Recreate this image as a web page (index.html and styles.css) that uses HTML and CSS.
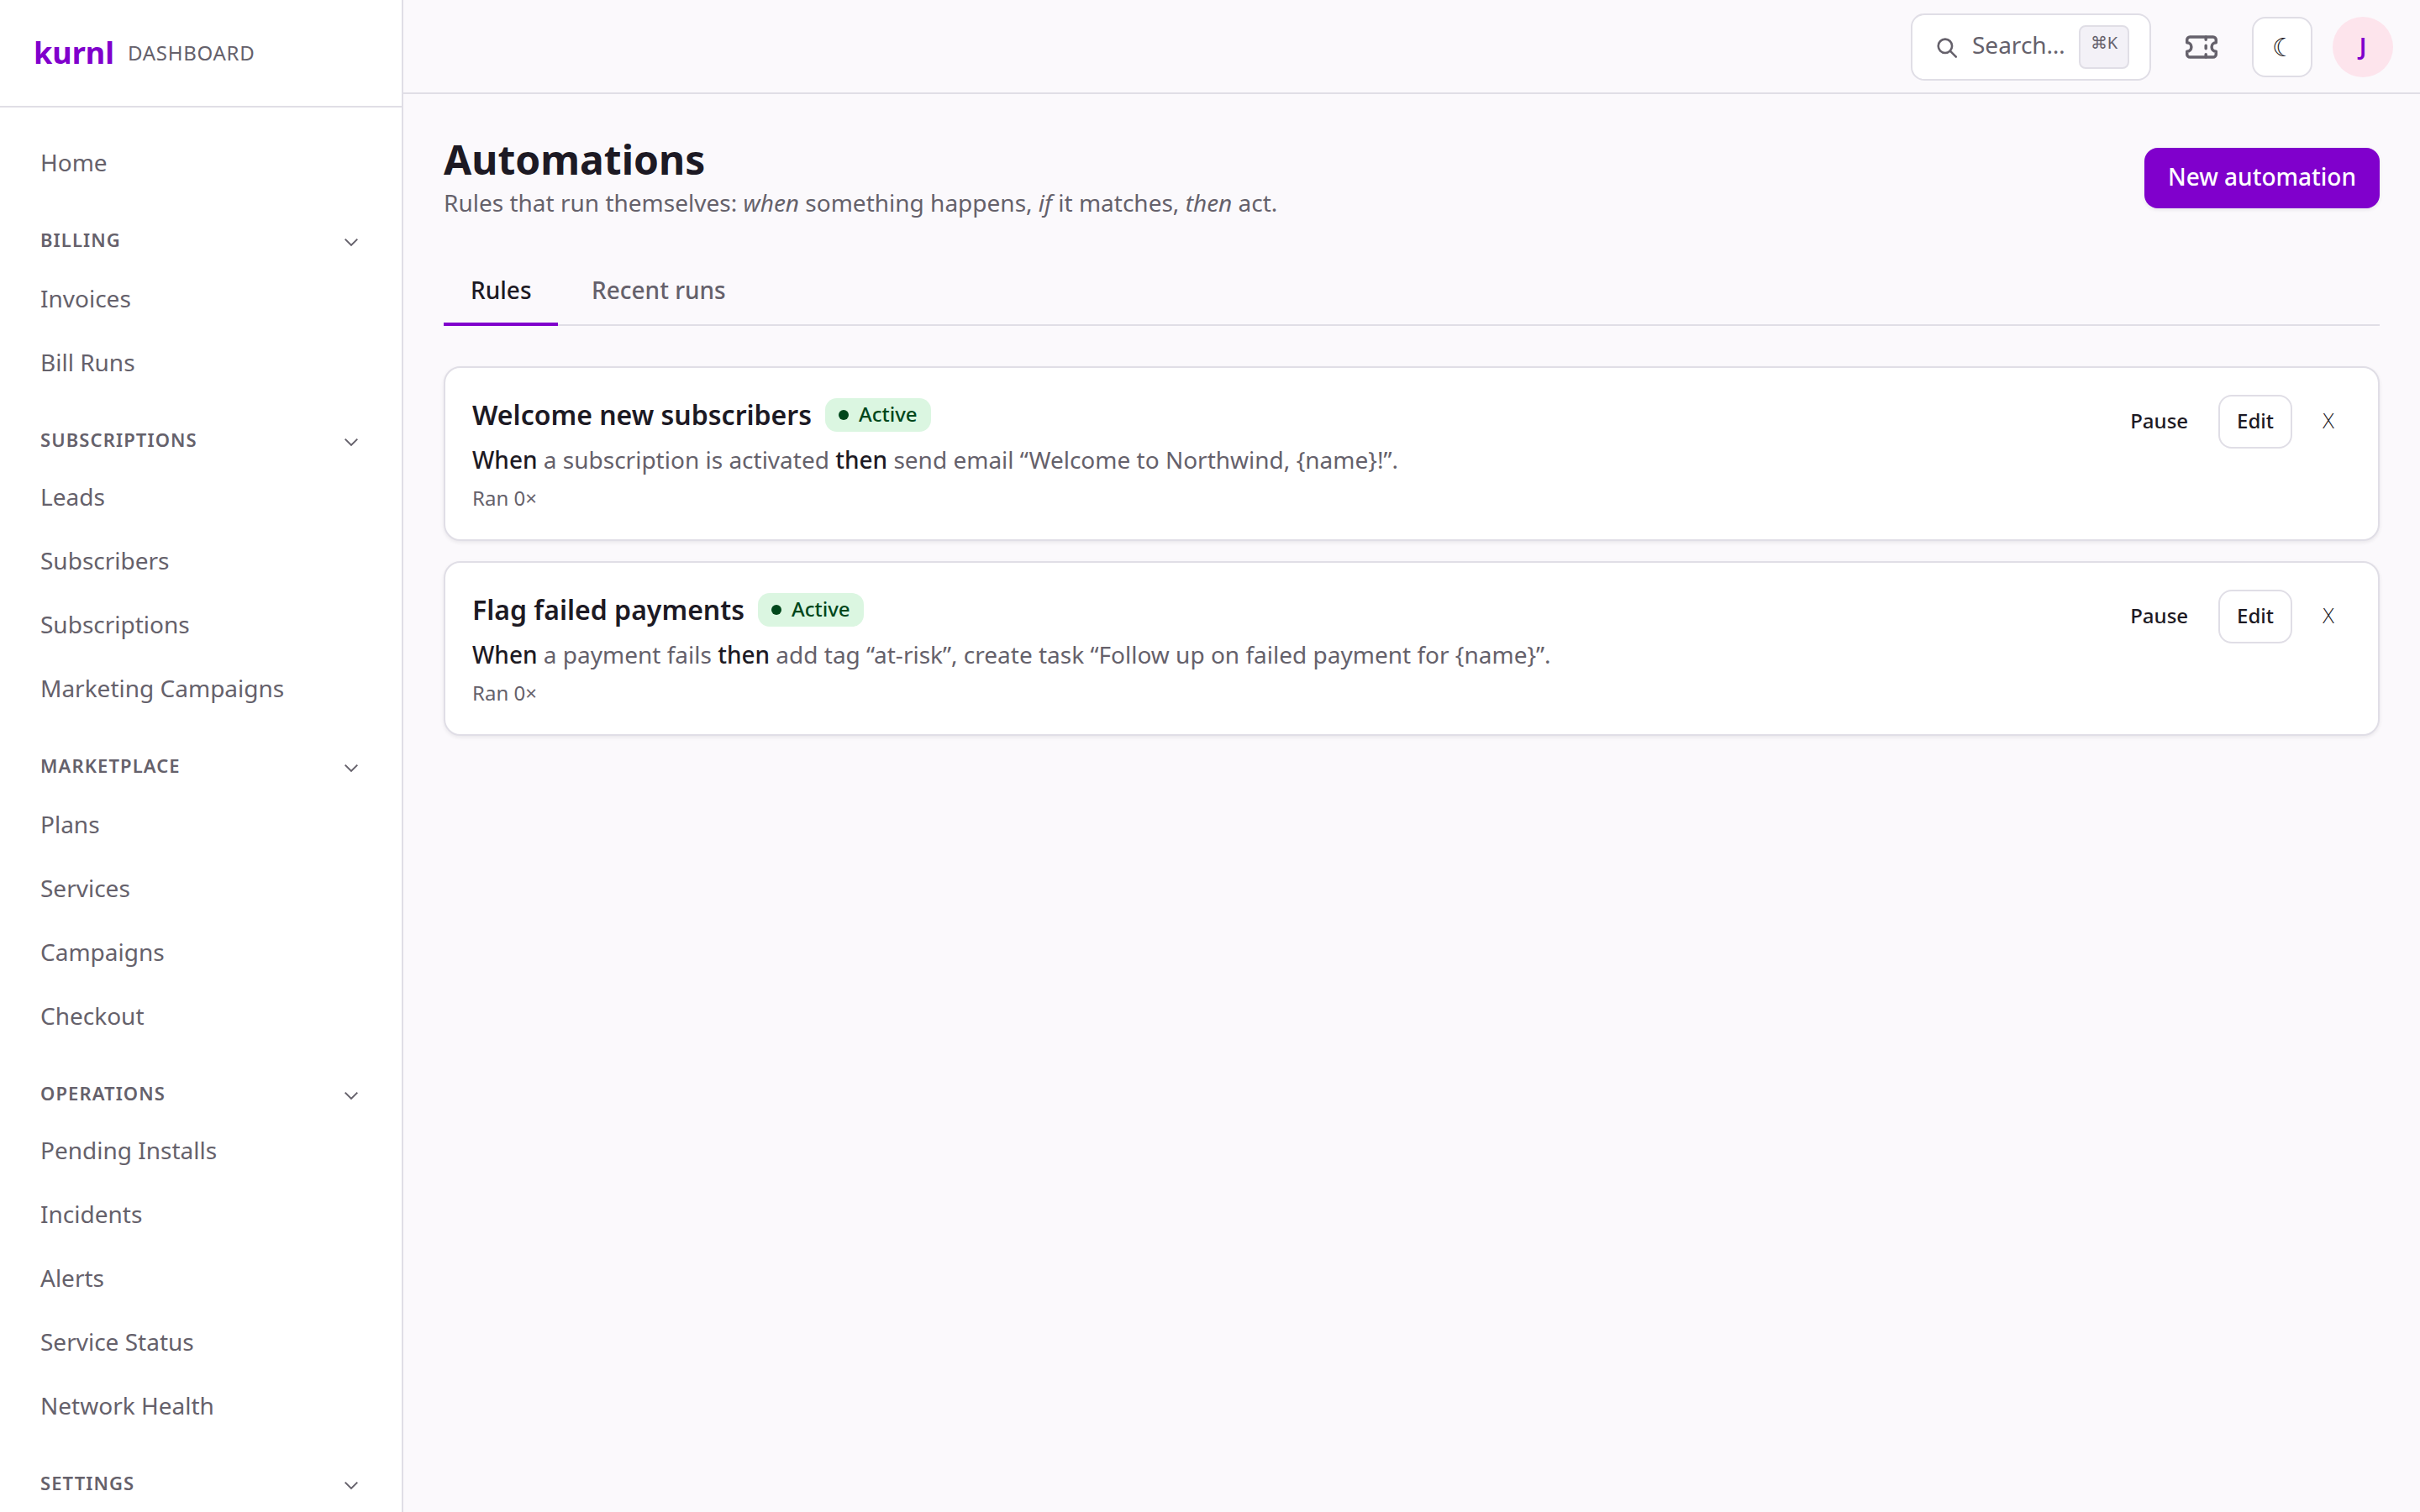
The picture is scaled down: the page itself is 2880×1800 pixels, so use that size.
FILE: index.html
```html
<!DOCTYPE html>
<html lang="en">
<head>
<meta charset="utf-8">
<title>Automations</title>
<link rel="stylesheet" href="styles.css">
</head>
<body>
<div class="app">
  <aside class="sidebar">
    <div class="brand"><span class="logo">kurnl</span><span class="brand-sub">DASHBOARD</span></div>
    <nav class="nav">
      <a class="item">Home</a>
      <div class="group loose"><span class="group-name">BILLING</span><svg class="chev" viewBox="0 0 20 20"><path d="M2.700 8.600l7.300 7.300L17.300 8.600"/></svg></div>
      <a class="item">Invoices</a>
      <a class="item">Bill Runs</a>
      <div class="group"><span class="group-name">SUBSCRIPTIONS</span><svg class="chev" viewBox="0 0 20 20"><path d="M2.700 8.600l7.300 7.300L17.300 8.600"/></svg></div>
      <a class="item">Leads</a>
      <a class="item">Subscribers</a>
      <a class="item">Subscriptions</a>
      <a class="item">Marketing Campaigns</a>
      <div class="group loose"><span class="group-name">MARKETPLACE</span><svg class="chev" viewBox="0 0 20 20"><path d="M2.700 8.600l7.300 7.300L17.300 8.600"/></svg></div>
      <a class="item">Plans</a>
      <a class="item">Services</a>
      <a class="item">Campaigns</a>
      <a class="item">Checkout</a>
      <div class="group"><span class="group-name">OPERATIONS</span><svg class="chev" viewBox="0 0 20 20"><path d="M2.700 8.600l7.300 7.300L17.300 8.600"/></svg></div>
      <a class="item">Pending Installs</a>
      <a class="item">Incidents</a>
      <a class="item">Alerts</a>
      <a class="item">Service Status</a>
      <a class="item">Network Health</a>
      <div class="group"><span class="group-name">SETTINGS</span><svg class="chev" viewBox="0 0 20 20"><path d="M2.700 8.600l7.300 7.300L17.300 8.600"/></svg></div>
    </nav>
  </aside>
  <div class="main">
    <header class="topbar">
      <div class="search">
        <svg class="search-icon" viewBox="0 0 28 28"><circle cx="10.900" cy="12.800" r="8.200"/><path d="M16.800 18.700L23.800 25.700"/></svg>
        <span class="search-text">Search…</span>
        <kbd class="kbd">⌘K</kbd>
      </div>
      <svg class="ticket" viewBox="1 4 22 16"><path d="M2 9a3 3 0 0 1 0 6v2a2 2 0 0 0 2 2h16a2 2 0 0 0 2-2v-2a3 3 0 0 1 0-6V7a2 2 0 0 0-2-2H4a2 2 0 0 0-2 2Z"/><path d="M15 5v2M15 11v2M15 17v2"/></svg>
      <button class="theme">☾</button>
      <div class="avatar">J</div>
    </header>
    <main class="content">
      <div class="page-head">
        <div>
          <h1>Automations</h1>
          <p class="lede">Rules that run themselves: <em>when</em> something happens, <em>if</em> it matches, <em>then</em> act.</p>
        </div>
        <button class="primary">New automation</button>
      </div>
      <div class="tabs"><a class="tab active">Rules</a><a class="tab">Recent runs</a></div>
      <div class="rules">
        <section class="card">
          <div class="info">
            <div class="title"><h2>Welcome new subscribers</h2><span class="badge"><i class="dot"></i><span class="badge-text">Active</span></span></div>
            <p class="desc"><b>When</b> a subscription is activated <b>then</b> send email “Welcome to Northwind, {name}!”.</p>
            <p class="meta">Ran 0×</p>
          </div>
          <div class="actions"><button class="btn ghost">Pause</button><button class="btn">Edit</button><button class="btn ghost close">X</button></div>
        </section>
        <section class="card">
          <div class="info">
            <div class="title"><h2>Flag failed payments</h2><span class="badge"><i class="dot"></i><span class="badge-text">Active</span></span></div>
            <p class="desc"><b>When</b> a payment fails <b>then</b> add tag “at-risk”, create task “Follow up on failed payment for {name}”.</p>
            <p class="meta">Ran 0×</p>
          </div>
          <div class="actions"><button class="btn ghost">Pause</button><button class="btn">Edit</button><button class="btn ghost close">X</button></div>
        </section>
      </div>
    </main>
  </div>
</div>
</body>
</html>
```
FILE: styles.css
```css
* { box-sizing: border-box; margin: 0; }
body { font-family: "Noto Sans", sans-serif; font-size: 28px; line-height: 42px; color: #1d1a24; background: #fbf9fc; }
button { font: inherit; color: inherit; padding: 0; }
.app { display: flex; height: 1800px; overflow: hidden; }
.sidebar { width: 480px; flex: none; background: #fff; border-right: 2px solid #e0dee6; }
.brand { height: 128px; display: flex; align-items: center; gap: 16px; padding-left: 40px; border-bottom: 2px solid #e0dee6; }
.logo { font-size: 36px; font-weight: 700; color: #8000cc; }
.brand-sub { font-size: 24px; letter-spacing: 0.72px; color: #65616b; }
.nav { display: flex; flex-direction: column; padding: 27px 50px 0 48px; color: #65616b; }
.item { height: 76px; line-height: 76px; }
.group { height: 60px; margin: 25px 0 -1px; display: flex; justify-content: space-between; align-items: center; font-size: 22px; font-weight: 600; letter-spacing: 1.1px; }
.group-name { margin-bottom: 2px; }
.loose { margin-bottom: 1px; }
.chev { width: 20px; height: 20px; fill: none; stroke: #65616b; stroke-width: 2; }
.main { flex: 1; min-width: 0; }
.topbar { height: 112px; display: flex; align-items: center; justify-content: flex-end; padding: 2px 32px 0 0; border-bottom: 2px solid #e0dee6; }
.search { width: 286px; height: 80px; display: flex; align-items: center; padding: 0 24px 0 28px; background: #fff; border: 2px solid #e0dee6; border-radius: 16px; color: #65616b; }
.search-icon { width: 28px; height: 28px; fill: none; stroke: #65616b; stroke-width: 2.6; stroke-linecap: round; }
.search-text { margin: 0 0 6px 15px; }
.kbd { width: 60px; height: 52px; margin-left: auto; font-family: "Noto Sans", sans-serif; font-size: 20px; line-height: 37px; text-align: center; background: #f3f1f7; border: 2px solid #e0dee6; border-radius: 8px; }
.ticket { width: 38px; height: 28px; margin: 0 41px; fill: none; stroke: #65616b; stroke-width: 2; stroke-linecap: round; stroke-linejoin: round; }
.theme { width: 72px; height: 72px; padding-left: 3px; font-size: 30px; background: #fff; border: 2px solid #e0dee6; border-radius: 16px; }
.avatar { width: 72px; height: 72px; margin-left: 24px; border-radius: 50%; background: #fde4ec; color: #8000cc; font-weight: 600; text-align: center; line-height: 70px; }
.content { padding: 48px; }
.page-head { display: flex; justify-content: space-between; align-items: center; }
h1 { font-size: 48px; line-height: 60px; font-weight: 700; }
.lede { color: #65616b; }
.primary { width: 280px; height: 72px; margin-top: 2px; padding-bottom: 5px; background: #8000cc; color: #fff; font-weight: 500; border: 0; border-radius: 16px; box-shadow: 0 2px 4px rgba(29,26,36,.08); }
.tabs { display: flex; gap: 8px; height: 84px; margin-top: 42px; border-bottom: 2px solid #e0dee6; }
.tab { height: 84px; padding: 0 32px; line-height: 82px; font-weight: 500; color: #65616b; }
.active { width: 136px; color: #1d1a24; border-bottom: 4px solid #8000cc; }
.rules { display: flex; flex-direction: column; gap: 24px; margin-top: 48px; }
.card { height: 208px; display: flex; justify-content: space-between; padding: 32px; background: #fff; border: 2px solid #e0dee6; border-radius: 20px; box-shadow: 0 2px 4px rgba(29,26,36,.08); }
.title { display: flex; align-items: center; gap: 16px; height: 48px; }
h2 { font-size: 32px; font-weight: 600; }
.badge { display: flex; align-items: center; gap: 12px; height: 40px; padding: 0 16px; font-size: 24px; font-weight: 500; color: #00471b; background: #dbf6e1; border-radius: 14px; }
.badge-text { margin-bottom: 2px; }
.dot { width: 12px; height: 12px; border-radius: 50%; background: #00471b; }
.desc { margin-top: 8px; color: #65616b; }
.desc b { font-weight: 500; color: #1d1a24; }
.meta { margin-top: 7px; font-size: 24px; line-height: 36px; color: #65616b; }
.actions { display: flex; gap: 16px; }
.btn { height: 64px; padding: 0 20px 2px; font-size: 24px; font-weight: 500; background: #fff; border: 2px solid #e0dee6; border-radius: 16px; }
.ghost { border-color: transparent; border-right-width: 0; }
.close { width: 54px; padding: 0; border-right-width: 2px; font-family: "DejaVu Sans", sans-serif; font-weight: 200; }
```
